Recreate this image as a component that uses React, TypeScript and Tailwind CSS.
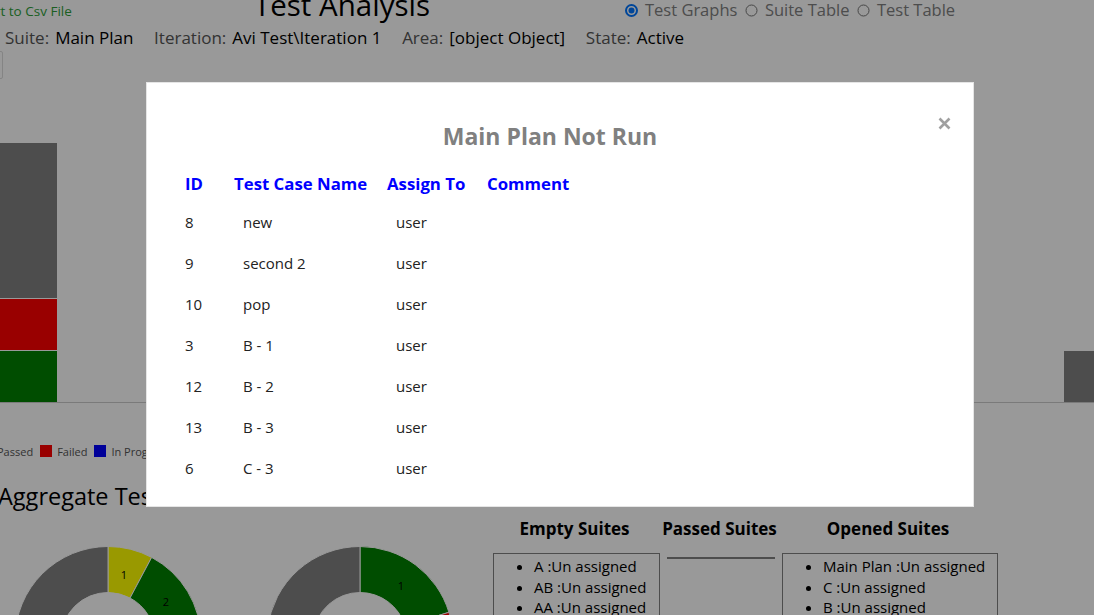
import React from "react";

function arc(cx: number, cy: number, R: number, r: number, a0: number, a1: number) {
  const rad = (d: number) => (d * Math.PI) / 180;
  const p = (rr: number, a: number) => [cx + rr * Math.sin(rad(a)), cy - rr * Math.cos(rad(a))];
  const large = a1 - a0 > 180 ? 1 : 0;
  const [x0, y0] = p(R, a0);
  const [x1, y1] = p(R, a1);
  const [x2, y2] = p(r, a1);
  const [x3, y3] = p(r, a0);
  return `M${x0} ${y0} A${R} ${R} 0 ${large} 1 ${x1} ${y1} L${x2} ${y2} A${r} ${r} 0 ${large} 0 ${x3} ${y3} Z`;
}

function Radio({ checked, label }: { checked?: boolean; label: string }) {
  return (
    <div className="flex items-center">
      <svg width="13" height="13" viewBox="0 0 13 13" className="shrink-0">
        {checked ? (
          <>
            <circle cx="6.5" cy="6.5" r="5.5" fill="#fff" stroke="#0075ff" strokeWidth="2" />
            <circle cx="6.5" cy="6.5" r="3" fill="#0075ff" />
          </>
        ) : (
          <circle cx="6.5" cy="6.5" r="5.5" fill="#fff" stroke="#767676" strokeWidth="1" />
        )}
      </svg>
      <span className="ml-[7px] mr-[7.5px] text-[16.5px] leading-[22px] text-[#808080]">{label}</span>
    </div>
  );
}

function Info({ label, value }: { label: string; value: string }) {
  return (
    <div className="flex text-[17px] leading-[24px]">
      <span className="text-[#555]">{label}</span>
      <span className="ml-[6px] text-black">{value}</span>
    </div>
  );
}

const rows = [
  ["8", "new"],
  ["9", "second 2"],
  ["10", "pop"],
  ["3", "B - 1"],
  ["12", "B - 2"],
  ["13", "B - 3"],
  ["6", "C - 3"],
];

function SuiteBox({ items }: { items: string[] }) {
  return (
    <ul className="list-disc w-full border border-[#808080] pl-[40px] pt-[2px] pb-[4px] text-[15px] leading-[20.5px] text-black">
      {items.map((t) => (
        <li key={t}>{t}</li>
      ))}
    </ul>
  );
}

export default function App() {
  return (
    <div className="relative w-[1094px] h-[615px] overflow-hidden bg-white font-['Open_Sans',sans-serif]">
      {/* Page */}
      <div className="flex flex-col">
        {/* row 1 */}
        <div className="flex h-[26px] items-start">
          <div className="w-[256px] pt-[2px]">
            <span className="block -ml-[36px] whitespace-nowrap text-[13.5px] leading-[18px] text-[#2f9f3a]">
              Export to Csv File
            </span>
          </div>
          <div className="w-[369px] -ml-[2px] -mt-[15px] text-[29.5px] leading-[39px] text-black whitespace-nowrap">
            Test Analysis
          </div>
          <div className="flex items-center -mt-[1px] ml-[2px]">
            <Radio checked label="Test Graphs" />
            <Radio label="Suite Table" />
            <Radio label="Test Table" />
          </div>
        </div>
        {/* row 2 */}
        <div className="flex h-[24px] pl-[5px] gap-[20.7px]">
          <Info label="Suite:" value="Main Plan" />
          <Info label="Iteration:" value="Avi Test\Iteration 1" />
          <Info label="Area:" value="[object Object]" />
          <Info label="State:" value="Active" />
        </div>
        {/* row 3 */}
        <div className="h-[30px]">
          <div className="-ml-[100px] mt-[1px] w-[103px] h-[28px] border border-[#ddd] rounded-[2px]" />
        </div>
        {/* bar chart */}
        <svg width="1094" height="323" className="block">
          <rect x="0" y="63" width="57" height="155" fill="#808080" />
          <rect x="0" y="219" width="57" height="51" fill="#ff0000" />
          <rect x="0" y="271" width="57" height="51" fill="#008000" />
          <rect x="1064" y="271" width="30" height="51" fill="#808080" />
          <rect x="0" y="322" width="1094" height="1" fill="#cccccc" />
        </svg>
        {/* legend */}
        <div className="mt-[40.5px] h-[15px] flex items-center -ml-[20px] text-[11px] leading-[15px] text-[#555] whitespace-nowrap">
          <span className="w-[12px] h-[12px] bg-[#008000]" />
          <span className="ml-[5px]">Passed</span>
          <span className="ml-[7px] w-[12px] h-[12px] bg-[#ff0000]" />
          <span className="ml-[5px]">Failed</span>
          <span className="ml-[7px] w-[12px] h-[12px] bg-[#0000ff]" />
          <span className="ml-[5px]">In Progress</span>
        </div>
        {/* aggregate heading */}
        <div className="mt-[21px] -ml-[2px] h-[33px] text-[23.5px] leading-[33px] text-black whitespace-nowrap">
          Aggregate Test Results
        </div>
        {/* bottom */}
        <div className="flex items-start mt-[3px]">
          <svg width="493" height="100" className="block shrink-0">
            <g stroke="#fff" strokeWidth="1">
              <path d={arc(108, 123.5, 93, 47, 0, 28)} fill="#ffff00" />
              <path d={arc(108, 123.5, 93, 47, 28, 90)} fill="#008000" />
              <path d={arc(108, 123.5, 93, 47, 90, 360)} fill="#808080" />
              <path d={arc(360, 123.5, 93, 47, 0, 73)} fill="#008000" />
              <path d={arc(360, 123.5, 93, 47, 73, 110)} fill="#ff0000" />
              <path d={arc(360, 123.5, 93, 47, 110, 360)} fill="#808080" />
            </g>
            <g fontSize="11" fill="#000" textAnchor="middle" dominantBaseline="central">
              <text x="124" y="58.5">1</text>
              <text x="166" y="85.5">2</text>
              <text x="401" y="69.5">1</text>
            </g>
          </svg>
          <div className="flex items-start pt-[1px]">
            <div className="w-[167px] flex flex-col items-center">
              <div className="-ml-[4px] text-[17px] leading-[23px] font-bold text-black whitespace-nowrap">Empty Suites</div>
              <div className="w-full mt-[13.5px]">
                <SuiteBox items={["A :Un assigned", "AB :Un assigned", "AA :Un assigned"]} />
              </div>
            </div>
            <div className="ml-[3px] w-[115px] flex flex-col items-center">
              <div className="-ml-[2px] text-[17px] leading-[23px] font-bold text-black whitespace-nowrap">Passed Suites</div>
              <div className="mt-[17.5px] w-[108px] border-t border-b border-[#808080]" />
            </div>
            <div className="ml-[4px] w-[216px] flex flex-col items-center">
              <div className="-ml-[4px] text-[17px] leading-[23px] font-bold text-black whitespace-nowrap">Opened Suites</div>
              <div className="w-full mt-[13.5px]">
                <SuiteBox items={["Main Plan :Un assigned", "C :Un assigned", "B :Un assigned"]} />
              </div>
            </div>
          </div>
        </div>
      </div>

      {/* overlay */}
      <div className="absolute inset-0 bg-black/40" />

      {/* modal */}
      <div className="absolute left-[146px] top-[82px] w-[828px] h-[425px] bg-white border border-black/10 pl-[38px] pt-[38px]">
        <svg width="13" height="13" viewBox="0 0 13 13" className="absolute left-[791px] top-[34px]">
          <path d="M1.5 1.5 L11.5 11.5 M11.5 1.5 L1.5 11.5" stroke="#a0a0a0" strokeWidth="2.6" />
        </svg>
        <div className="w-[730px] text-center text-[23px] leading-[31px] font-bold text-[#808080]">
          Main Plan Not Run
        </div>
        <div className="mt-[20px] grid grid-cols-[49px_153px_100px_1fr] h-[23px] items-center text-[16.8px] leading-[23px] font-bold text-[#0000ff] whitespace-nowrap">
          <div>ID</div>
          <div>Test Case Name</div>
          <div>Assign To</div>
          <div>Comment</div>
        </div>
        <div className="mt-[6px]">
          {rows.map(([id, name]) => (
            <div key={id} className="grid grid-cols-[49px_153px_100px_1fr] h-[41px] items-center text-[15px] leading-[20px] text-[#222]">
              <div>{id}</div>
              <div className="pl-[9px]">{name}</div>
              <div className="pl-[9px]">user</div>
              <div />
            </div>
          ))}
        </div>
      </div>
    </div>
  );
}
